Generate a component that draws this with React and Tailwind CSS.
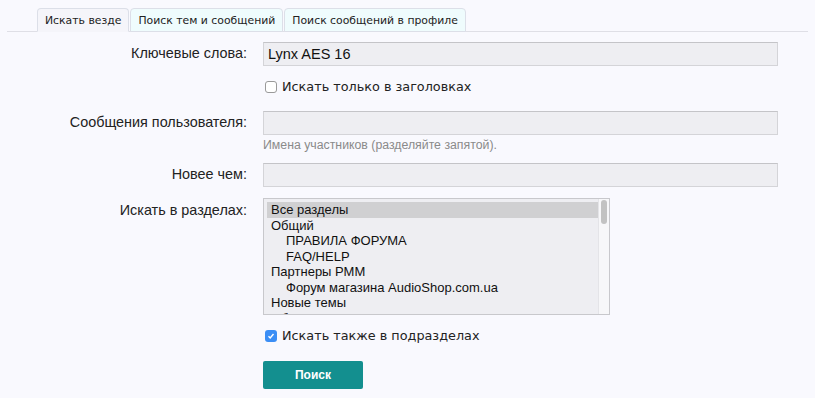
import React from 'react';

const TABS = ['Искать везде', 'Поиск тем и сообщений', 'Поиск сообщений в профиле'];

const FORUMS = [
  { name: 'Все разделы', depth: 0, selected: true },
  { name: 'Общий', depth: 0 },
  { name: 'ПРАВИЛА ФОРУМА', depth: 1 },
  { name: 'FAQ/HELP', depth: 1 },
  { name: 'Партнеры РММ', depth: 0 },
  { name: 'Форум магазина AudioShop.com.ua', depth: 1 },
  { name: 'Новые темы', depth: 0 },
  { name: 'Обсуждения', depth: 0 },
];

const sans = "font-['Liberation_Sans',Arial,sans-serif]";
const verd = "font-['DejaVu_Sans',Verdana,sans-serif]";

function Label({ children }) {
  return (
    <div className={`w-[263px] shrink-0 pr-[16px] text-right text-[14.4px] text-[#222] ${sans}`}>{children}</div>
  );
}

function Input({ value }) {
  return (
    <div className={`h-[24px] w-[515px] border border-[#d4d4d8] border-t-[#c4c4c8] bg-[#eeeef2] px-[4px] text-[14.5px] leading-[22px] text-[#111] ${sans}`}>
      {value}
    </div>
  );
}

export default function App() {
  return (
    <div className="min-h-screen w-[815px] h-[398px] overflow-hidden bg-[#f9f9fe]">
      {/* Tabs */}
      <div className="mx-[7px] mt-[8px] flex border-b border-[#dfdfe6] pl-[30px]">
        {TABS.map((t, i) => (
          <div
            key={t}
            className={`-mb-px mr-px h-[24px] rounded-t-[4px] border border-[#dcdfe8] px-[7px] text-[10.85px] leading-[23px] text-[#222] ${verd} ${
              i === 0 ? 'border-b-[#f5f5fa] bg-[#f5f5fa]' : 'bg-[#effcfd]'
            }`}
          >
            {t}
          </div>
        ))}
      </div>

      <div className="pt-[10px]">
        <div className="flex items-center">
          <Label>Ключевые слова:</Label>
          <Input value="Lynx AES 16" />
        </div>
        <div className="mt-[11px] flex items-center pl-[265px]">
          <span className="h-[12px] w-[12px] rounded-[3px] border border-[#9a9a9a] bg-white" />
          <span className={`ml-[5px] text-[12.8px] text-[#222] ${verd}`}>Искать только в заголовках</span>
        </div>

        <div className="mt-[15px] flex items-center">
          <Label>Сообщения пользователя:</Label>
          <Input value="" />
        </div>
        <div className={`ml-[263px] mt-[2px] text-[12.3px] leading-[16px] text-[#8a8a8a] ${sans}`}>Имена участников (разделяйте запятой).</div>

        <div className="mt-[10px] flex items-center">
          <Label>Новее чем:</Label>
          <Input value="" />
        </div>

        <div className="mt-[11px] flex items-start">
          <Label>
            <span className="block pt-[2px]">Искать в разделах:</span>
          </Label>
          <div className="flex h-[117px] w-[347px] border border-[#c8c8cc] bg-[#eeeef2]">
            <div className={`flex-1 overflow-hidden pl-[3px] pt-[3px] text-[13px] leading-[15.5px] text-[#111] ${sans}`}>
              {FORUMS.map((f) => (
                <div
                  key={f.name}
                  className={`${f.selected ? 'bg-[#d0d0d2]' : ''} ${f.depth ? 'pl-[19px]' : 'pl-[4px]'}`}
                >
                  {f.name}
                </div>
              ))}
            </div>
            <div className="w-[11px] border-l border-[#e4e4e8] bg-[#f7f7f9] pt-[1px]">
              <div className="mx-auto h-[24px] w-[6px] rounded-full bg-[#c2c2c2]" />
            </div>
          </div>
        </div>

        <div className="mt-[11px] flex items-center pl-[265px]">
          <span className="flex h-[12px] w-[12px] items-center justify-center rounded-[3px] bg-[#3b8ef5]">
            <svg width="8" height="8" viewBox="0 0 8 8">
              <path d="M1.5 4.2 L3.2 5.9 L6.5 2" fill="none" stroke="white" strokeWidth="1.4" />
            </svg>
          </span>
          <span className={`ml-[5px] text-[12.8px] text-[#222] ${verd}`}>Искать также в подразделах</span>
        </div>

        <div className="mt-[16px] pl-[263px]">
          <button className={`h-[28px] w-[100px] rounded-[2px] bg-[#138f8f] text-[12px] font-bold text-white ${sans}`}>
            Поиск
          </button>
        </div>
      </div>
    </div>
  );
}
